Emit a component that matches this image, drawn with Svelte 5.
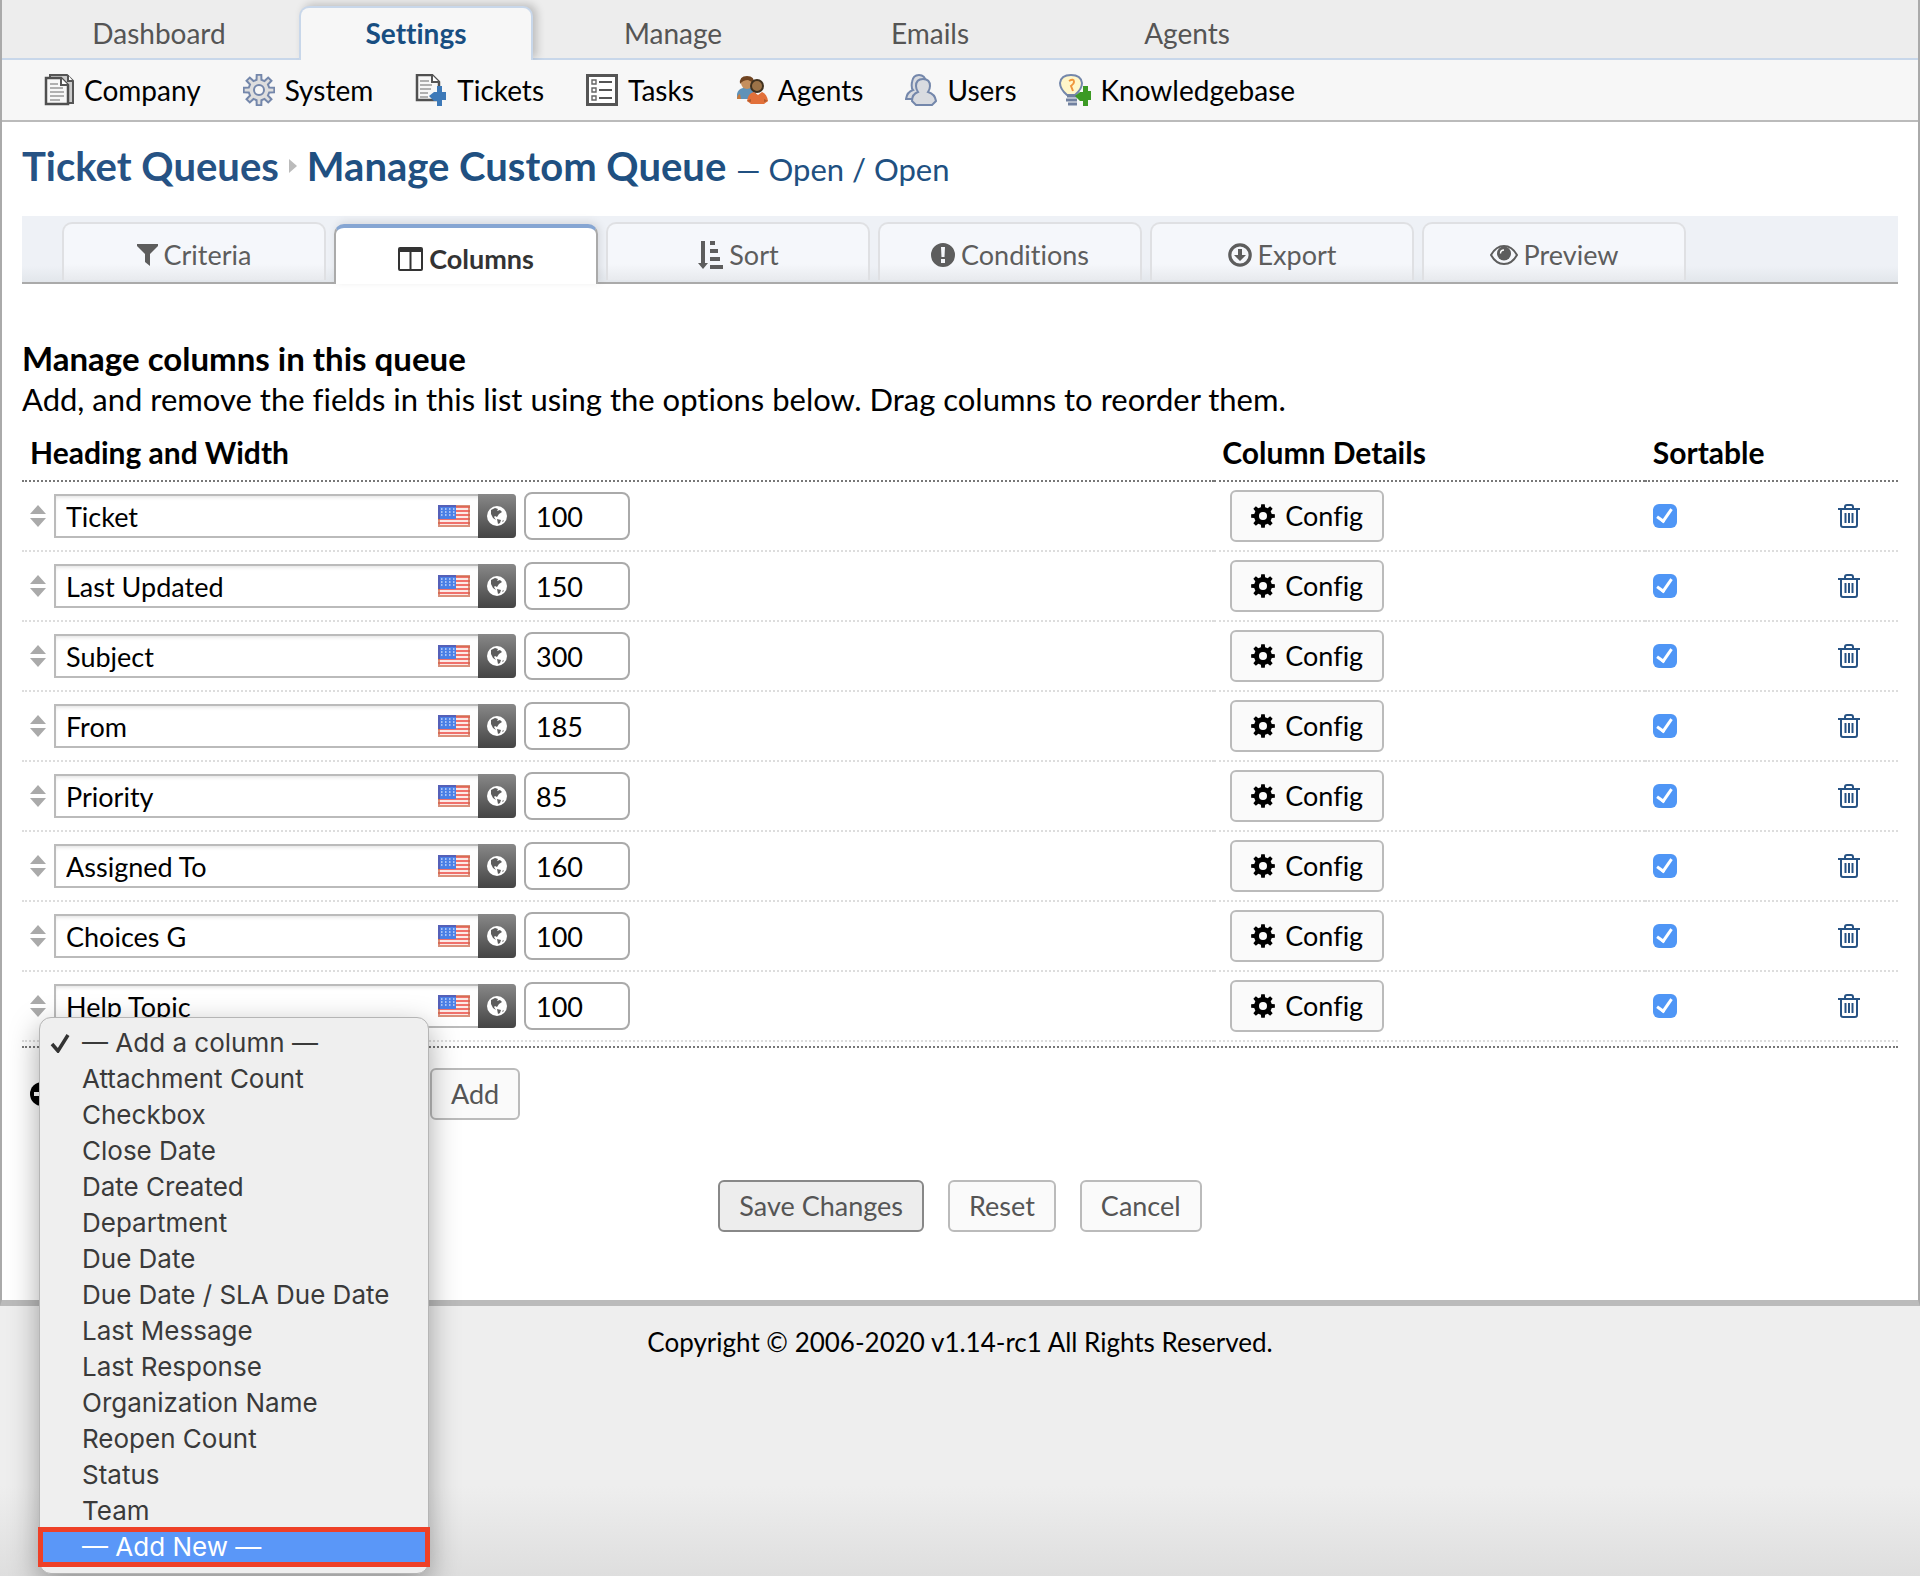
<script>
  const tabs = ['Dashboard', 'Settings', 'Manage', 'Emails', 'Agents']
  const subnav = ['Company', 'System', 'Tickets', 'Tasks', 'Agents', 'Users', 'Knowledgebase']
  const queueTabs = ['Criteria', 'Columns', 'Sort', 'Conditions', 'Export', 'Preview']

  let columns = [
    { heading: 'Ticket', width: '100', sortable: true },
    { heading: 'Last Updated', width: '150', sortable: true },
    { heading: 'Subject', width: '300', sortable: true },
    { heading: 'From', width: '185', sortable: true },
    { heading: 'Priority', width: '85', sortable: true },
    { heading: 'Assigned To', width: '160', sortable: true },
    { heading: 'Choices G', width: '100', sortable: true },
    { heading: 'Help Topic', width: '100', sortable: true }
  ]

  const fields = [
    '— Add a column —', 'Attachment Count', 'Checkbox', 'Close Date', 'Date Created',
    'Department', 'Due Date', 'Due Date / SLA Due Date', 'Last Message', 'Last Response',
    'Organization Name', 'Reopen Count', 'Status', 'Team', '— Add New —'
  ]
  let selected = fields[0]
  let hovered = '— Add New —'

  // outline of a cog with n teeth, centred on c
  const cog = (n, c, outer, inner) => {
    const step = (Math.PI * 2) / n
    const at = (r, a) => `${(c + r * Math.sin(a)).toFixed(2)} ${(c - r * Math.cos(a)).toFixed(2)}`
    let pts = []
    for (let i = 0; i < n; i++) {
      const a = i * step
      pts.push(at(inner, a - step * 0.3), at(outer, a - step * 0.19), at(outer, a + step * 0.19), at(inner, a + step * 0.3))
    }
    return `M${pts.join('L')}Z`
  }
  const bigCog = cog(8, 16, 15.5, 10.5)
  const smallCog = cog(8, 12, 12, 9)
</script>

<div class="page">
  <nav class="tabs">
    {#each tabs as tab}
      <a href="#{tab}" class:active={tab == 'Settings'}>{tab}</a>
    {/each}
  </nav>

  <nav class="subnav">
    {#each subnav as item}
      <a href="#{item}">
        <svg viewBox="0 0 32 32" width="32" height="32" aria-hidden="true">
          {#if item == 'Company'}
            <path d="M8 1h17l6 6v22H8z" fill="#ccc" stroke="#555" stroke-width="2" />
            <path d="M26 1v6h5" fill="#fff" stroke="#555" stroke-width="2" />
            <path d="M4 4h15l7 7v19H4z" fill="#f7f7f7" stroke="#505050" stroke-width="2.500" />
            <path d="M19 4v7h7" fill="#fff" stroke="#555" stroke-width="2" />
            <path d="M8 10h8M8 14h13M8 18h14M8 22h14M8 26h10" stroke="#b0b0b0" stroke-width="2" />
          {:else if item == 'System'}
            <path d={bigCog} fill="#dedede" stroke="#7487ab" stroke-width="2" />
            <circle cx="16" cy="16" r="5" fill="#f7f7f7" stroke="#7487ab" stroke-width="2" />
          {:else if item == 'Tickets'}
            <path d="M2 1h15l7 7v18H2z" fill="#f7f7f7" stroke="#505050" stroke-width="2.500" />
            <path d="M17 1v7h7" fill="#fff" stroke="#555" stroke-width="2" />
            <path d="M5 7h9M5 11h12M5 15h11M5 19h8M5 23h8" stroke="#b0b0b0" stroke-width="2" />
            <path d="M22 12h5v6h4v8h-4v6h-5v-5h-3l-5-5 5-4h3z" fill="#3d79b8" />
          {:else if item == 'Tasks'}
            <rect x="1.5" y="1.5" width="29" height="29" fill="#fff" stroke="#555" stroke-width="3" />
            <path d="M6 6h4v4H6zM6 14h4v4H6zM6 22h4v4H6z" fill="#fff" stroke="#666" stroke-width="1.4" />
            <path d="M13 8h13M13 16h13M13 24h13" stroke="#555" stroke-width="2" />
          {:else if item == 'Agents'}
            <path d="M1 24v-4q1-5 6-6h8q4 1 5 5v6H1z" fill="#5f92b8" />
            <circle cx="11" cy="9" r="6" fill="#c58f5d" />
            <path d="M4 10q-1-8 7-8 8 0 7 8-3-3-6-4-5 0-8 4z" fill="#704421" />
            <path d="M1 25q0-4 3-5l1 5z" fill="#c97b3c" />
            <circle cx="21" cy="12" r="6" fill="#9c7348" stroke="#40311f" stroke-width="2" />
            <path d="M11 27q1-8 7-9l4 3 4-3q5 2 6 9l-4 3H15z" fill="#e2703a" />
            <path d="M11 27l4-2v3zM32 27l-4-2v3z" fill="#b05a2c" />
          {:else if item == 'Users'}
            <g fill="#d9dbe0" stroke="#7487ab" stroke-width="2">
              <path d="M1 25q1-7 7-9-2-2-1-8 1-7 7-7t7 7v8l-3 9z" />
              <path d="M7 27q0-7 6-9-2-3-2-6 0-7 7-7t7 7q0 3-2 6 7 2 8 9l-4 4H11z" />
            </g>
          {:else}
            <path d="M8 21Q1 15 1 9q1-8 11-8t11 8q0 6-7 12z" fill="#fff6c9" stroke="#7487ab" stroke-width="2" />
            <path d="M10 7q5-3 5 1 0 2-3 4l2 5" fill="none" stroke="#f0953c" stroke-width="2" />
            <path d="M8 22h10M7 26h11M9 30h9" stroke="#7181a0" stroke-width="3" />
            <path d="M24 12h5v5h3v9h-3v6h-5v-5h-3l-5-5 5-4h3z" fill="#3c9a24" />
          {/if}
        </svg>
        {item}
      </a>
    {/each}
  </nav>

  <main>
    <h1>
      <a href="#queues">Ticket Queues</a>
      <svg viewBox="0 0 8 14" width="8" height="14" aria-hidden="true"><path d="M0 0l8 7-8 7z" fill="#bbb" /></svg>
      <a href="#queue">Manage Custom Queue <small>— Open / Open</small></a>
    </h1>

    <div class="queue-tabs">
      {#each queueTabs as tab}
        <a href="#{tab}" class:active={tab == 'Columns'}>
          {#if tab == 'Criteria'}
            <svg viewBox="0 0 21 22" width="21" height="22"><path d="M0 0h21v2l-8 8v12l-5-4v-8L0 2z" /></svg>
          {:else if tab == 'Columns'}
            <svg viewBox="0 0 25 24" width="25" height="24"><path fill-rule="evenodd" d="M2 0h21q2 0 2 2v20q0 2-2 2H2q-2 0-2-2V2q0-2 2-2zM2 5v17h9.500V5zM13.500 5v17H23V5z" /></svg>
          {:else if tab == 'Sort'}
            <svg viewBox="0 0 26 28" width="26" height="28"><path d="M4 0h4v22h3l-5 6-5-6h3zM13 0h5v4h-5zM13 8h8v4h-8zM13 16h10v4H13zM13 24h13v4H13z" /></svg>
          {:else if tab == 'Conditions'}
            <svg viewBox="0 0 24 24" width="24" height="24"><path fill-rule="evenodd" d="M12 0a12 12 0 100 24 12 12 0 000-24zM10 4h4l-.5 10h-3zM10 16h4v4h-4z" /></svg>
          {:else if tab == 'Export'}
            <svg viewBox="0 0 24 24" width="24" height="24"><circle cx="12" cy="12" r="10.200" fill="none" stroke="currentColor" stroke-width="3.200" /><path d="M10 6h4v6h4l-6 6-6-6h4z" /></svg>
          {:else}
            <svg viewBox="0 0 28 20" width="28" height="20"><path d="M1 10Q6 1 14 1t13 9q-5 9-13 9T1 10z" fill="none" stroke="currentColor" stroke-width="2" /><circle cx="14" cy="8.500" r="7" /><path d="M10.500 8.500q0-3.500 3.500-3.500" fill="none" stroke="#fff" stroke-width="1.400" /></svg>
          {/if}
          {tab}
        </a>
      {/each}
    </div>

    <h2>Manage columns in this queue</h2>
    <p class="hint">Add, and remove the fields in this list using the options below. Drag columns to reorder them.</p>

    <table>
      <thead>
        <tr>
          <th class="heading">Heading and Width</th>
          <th class="details">Column Details</th>
          <th>Sortable</th>
        </tr>
      </thead>
      <tbody>
        {#each columns as col}
          <tr>
            <td>
              <div class="cell">
                <svg class="drag" viewBox="0 0 16 22" width="16" height="22" aria-hidden="true"><path d="M0 9l8-9 8 9zM0 13h16l-8 9z" /></svg>
                <div class="translatable">
                  <input type="text" bind:value={col.heading} aria-label="Heading" />
                  <svg viewBox="0 0 32 22" width="32" height="22" aria-hidden="true">
                    <rect width="32" height="22" fill="#fbeae6" />
                    <path d="M0 2h32M0 6h32M0 10h32M0 14h32M0 18h32" stroke="#f0716b" stroke-width="2" />
                    <rect width="18" height="14" fill="#4b7fe6" />
                    <path d="M3 4h14M3 7h14M3 10h14" stroke="#c9dafa" stroke-width="1.500" stroke-dasharray="1.500 2.500" />
                    <path d="M0 1h18M1 0v14" stroke="#5560b8" stroke-width="2" />
                    <path d="M18 1h13v20H1v-7" fill="none" stroke="#cc6a4c" stroke-opacity=".7" stroke-width="2" />
                  </svg>
                  <button class="globe" type="button" aria-label="Translate">
                    <svg viewBox="0 0 20 20" width="20" height="20">
                      <circle cx="10" cy="10" r="10" fill="#fff" />
                      <path d="M4 4l4-2 3 1-1 2 3-1 2 2-3 2-2 3-2-1-1 1 2 3-3-2-2-4zM10 13l4 1-1 3-2 1zM15 15l2-1-1 2z" fill="#5d5d5d" />
                    </svg>
                  </button>
                </div>
                <input class="width" type="text" bind:value={col.width} aria-label="Width" />
              </div>
            </td>
            <td>
              <button class="button config" type="button">
                <svg viewBox="0 0 24 24" width="24" height="24"><path d={smallCog} /><circle cx="12" cy="12" r="4" fill="#fafafa" /></svg>
                Config
              </button>
            </td>
            <td>
              <div class="cell between">
                <input type="checkbox" bind:checked={col.sortable} aria-label="Sortable" />
                <a class="trash" href="#delete" aria-label="Delete">
                  <svg viewBox="0 0 22 24" width="22" height="24">
                    <path d="M0 5h22M7 5V3q0-2 2-2h4q2 0 2 2v2M3 5v16q0 2 2 2h12q2 0 2-2V5M7.500 9v10M11 9v10M14.500 9v10" fill="none" stroke="currentColor" stroke-width="2" />
                  </svg>
                </a>
              </div>
            </td>
          </tr>
        {/each}
      </tbody>
    </table>

    <div class="add-row">
      <svg viewBox="0 0 24 24" width="24" height="24" aria-hidden="true"><circle cx="12" cy="12" r="12" /><path d="M4 12h16M12 4v16" stroke="#fff" stroke-width="4" /></svg>
      <div class="picker">
        <select bind:value={selected} aria-label="Add a column">
          {#each fields as field}
            <option>{field}</option>
          {/each}
        </select>
        <ul class="menu" role="listbox" aria-label="Columns">
          {#each fields as field}
            <li role="option" aria-selected={field == selected} class:hovered={field == hovered}>
              {#if field == selected}
                <svg viewBox="0 0 20 20" width="20" height="20" aria-hidden="true"><path d="M2 11l6 7L18 2" fill="none" stroke="#333" stroke-width="3.500" /></svg>
              {/if}
              <span>{field}</span>
            </li>
          {/each}
        </ul>
      </div>
      <button class="button" type="button">Add</button>
    </div>

    <div class="actions">
      <button class="button save" type="submit">Save Changes</button>
      <button class="button" type="reset">Reset</button>
      <button class="button" type="button">Cancel</button>
    </div>
  </main>
</div>

<footer>Copyright © 2006-2020 v1.14-rc1 All Rights Reserved.</footer>

<style>
  :global(body) {
    min-height: 100vh;
    background: linear-gradient(to top, #dedede, #eee 90px);
    font: 27px/36px Lato, sans-serif;
    font-variant-ligatures: none;
    color: #000;
  }
  a {
    color: #265284;
    text-decoration: none;
  }
  svg {
    flex: none;
    fill: currentColor;
  }
  input, button, select {
    box-sizing: border-box;
    margin: 0;
    font: inherit;
    font-variant-ligatures: none;
    color: inherit;
  }

  .page {
    background: #fff;
    border: 2px solid #aaa;
    border-top: 0;
    border-bottom: 6px solid #bbb;
  }

  .tabs {
    display: flex;
    gap: 23px;
    height: 52px;
    padding: 6px 40px 0;
    background: #ededed;
    border-bottom: 2px solid #c8d7ea;
  }
  .tabs a {
    box-sizing: border-box;
    width: 234px;
    height: 54px;
    padding: 7px 0;
    border: 2px solid transparent;
    border-bottom: 0;
    font-size: 28px;
    text-align: center;
    color: #555;
  }
  .tabs .active {
    background: #f7f7f7;
    border-color: #c8d7ea;
    border-radius: 10px 10px 0 0;
    box-shadow: 4px -2px 8px rgba(0, 0, 0, .2);
    font-weight: bold;
    color: #184e81;
  }

  .subnav {
    position: relative;
    display: flex;
    gap: 42px;
    padding: 12px 40px;
    background: #f7f7f7;
    border-bottom: 2px solid #bbb;
  }
  .subnav a {
    display: flex;
    align-items: center;
    gap: 10px;
    font-size: 28px;
    color: #000;
  }

  main {
    padding: 20px 20px 68px;
  }

  h1 {
    display: flex;
    align-items: baseline;
    gap: 10px;
    margin: 0 0 26px;
    font-size: 40px;
    line-height: 48px;
  }
  h1 svg {
    align-self: center;
  }
  h1 small {
    font-size: 31px;
    font-weight: normal;
    line-height: 31px;
  }
  h1 a + svg + a {
    color: #205081;
  }

  .queue-tabs {
    display: flex;
    gap: 8px;
    height: 60px;
    padding: 6px 40px 0;
    background: linear-gradient(to top, #e2e6eb, #eef1f6 16px);
    border-bottom: 2px solid #aaa;
  }
  .queue-tabs a {
    box-sizing: border-box;
    display: flex;
    align-items: center;
    justify-content: center;
    gap: 6px;
    width: 264px;
    height: 58px;
    padding-top: 6px;
    background: linear-gradient(to top, #e8eaee, #f5f7fb 16px);
    border: 2px solid #dfe0e3;
    border-bottom: 0;
    border-radius: 10px 10px 0 0;
    color: #5d5d5d;
  }
  .queue-tabs .active {
    height: 60px;
    margin-top: 2px;
    background: #fff;
    border-color: #aaa;
    border-top: 4px solid #86a6d3;
    box-shadow: 2px -2px 8px rgba(0, 0, 0, .1);
    font-weight: bold;
    color: #333;
  }

  h2 {
    margin: 54px 0 0;
    font-size: 33px;
    line-height: 40px;
  }
  .hint {
    margin: 0;
    font-size: 31px;
    line-height: 42px;
  }

  table {
    width: 100%;
    table-layout: fixed;
    border-spacing: 0;
  }
  th {
    padding: 14px 8px 10px;
    border-bottom: 2px dotted #777;
    font-size: 30px;
    line-height: 36px;
    text-align: left;
  }
  .heading {
    width: 62.7%;
  }
  .details {
    width: 22.1%;
  }
  td {
    height: 52px;
    padding: 8px;
    border-bottom: 2px dotted #ddd;
    line-height: 0;
  }
  .cell {
    display: flex;
    align-items: center;
    gap: 8px;
  }
  .between {
    justify-content: space-between;
  }
  .drag {
    color: #aaa;
  }
  .translatable {
    box-sizing: border-box;
    display: flex;
    align-items: center;
    width: 462px;
    height: 44px;
    border: 2px solid #bbb;
    border-right: 0;
    border-radius: 0 4px 4px 0;
    box-shadow: inset 0 3px 4px -2px #ddd;
  }
  .translatable input {
    flex: 1;
    min-width: 0;
    padding: 0 10px;
    border: 0;
    background: none;
  }
  .globe {
    display: grid;
    place-items: center;
    width: 38px;
    height: 44px;
    margin-left: 8px;
    padding: 0;
    background: linear-gradient(#888, #444);
    border: 0;
    border-radius: 0 4px 4px 0;
  }
  .width {
    width: 106px;
    height: 48px;
    padding: 0 10px;
    border: 2px solid #aaa;
    border-radius: 8px;
  }
  input[type='checkbox'] {
    appearance: none;
    display: grid;
    place-items: center;
    width: 24px;
    height: 24px;
    border-radius: 6px;
    background: #fff;
  }
  input[type='checkbox']:checked {
    background: #4f96f6;
  }
  input[type='checkbox']:checked::after {
    content: '';
    width: 6px;
    height: 13px;
    border: solid #fff;
    border-width: 0 3px 3px 0;
    transform: translateY(-2px) rotate(35deg);
  }
  .trash {
    margin-right: 30px;
  }

  .button {
    display: inline-flex;
    align-items: center;
    height: 52px;
    padding: 0 19px;
    background: #fafafa;
    border: 2px solid #bbb;
    border-radius: 6px;
    line-height: 36px;
    color: #555;
  }
  .config {
    gap: 10px;
    margin-left: 8px;
    color: #000;
  }
  .save {
    background: #ededed;
    border-color: #888;
  }

  .add-row {
    display: flex;
    align-items: center;
    margin-top: 4px;
    padding: 20px 8px 0;
    border-top: 2px dotted #777;
  }
  .picker {
    position: relative;
    width: 368px;
    margin-left: 8px;
  }
  .picker select {
    width: 360px;
    height: 40px;
  }
  .menu {
    position: absolute;
    top: -57px;
    left: -23px;
    box-sizing: border-box;
    width: 390px;
    margin: 0;
    padding: 7px 0 8px;
    background: #efefef;
    border: 1px solid #b5b5b5;
    border-radius: 12px;
    box-shadow: 0 10px 30px rgba(0, 0, 0, .35);
    font: 26px/36px Inter, sans-serif;
    color: #3a3a3a;
    list-style: none;
  }
  .menu li {
    display: flex;
    align-items: center;
    justify-content: flex-end;
    gap: 12px;
    padding-left: 10px;
  }
  .menu span {
    width: 346px;
  }
  .menu .hovered {
    background: #5a97f8;
    outline: 5px solid #ee4027;
    outline-offset: -3px;
    color: #fff;
  }

  .actions {
    display: flex;
    justify-content: center;
    gap: 24px;
    margin-top: 60px;
  }

  footer {
    padding: 18px 0;
    font-size: 26px;
    text-align: center;
  }
</style>
